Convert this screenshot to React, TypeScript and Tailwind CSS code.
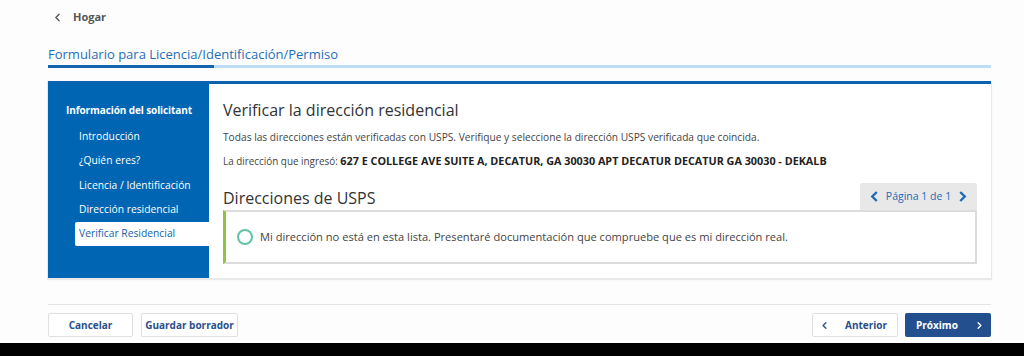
import { ChevronLeft, ChevronRight } from "lucide-react"

const steps = [
  "Introducción",
  "¿Quién eres?",
  "Licencia / Identificación",
  "Dirección residencial",
]

function Chevron({ dir }: { dir: "left" | "right" }) {
  return (
    <svg viewBox="0 0 10 14" className="h-[13px] w-[9px] shrink-0" fill="none">
      <polyline
        points={dir === "left" ? "7.5,2 2.5,7 7.5,12" : "2.5,2 7.5,7 2.5,12"}
        stroke="currentColor"
        strokeWidth={2.6}
        strokeLinejoin="miter"
      />
    </svg>
  )
}

export default function App() {
  return (
    <div className="flex h-[356px] w-[1024px] flex-col bg-[#fdfdfd] font-['Open_Sans',sans-serif] text-[#333]">
      {/* Breadcrumb */}
      <div className="flex h-[34px] items-center gap-[9px] pl-[51px] text-[11px] font-bold text-[#555]">
        <ChevronLeft className="h-[13px] w-[13px]" strokeWidth={2.5} />
        <span>Hogar</span>
      </div>

      <div className="ml-[48px] w-[943px]">
        {/* Title */}
        <h1 className="pt-[9px] text-[13px] leading-[22px] text-[#1f6fb7]">
          Formulario para Licencia/Identificación/Permiso
        </h1>
        <div className="flex h-[3px]">
          <div className="w-[166px] bg-[#1465b0]" />
          <div className="flex-1 bg-[#bddcf8]" />
        </div>

        {/* Card */}
        <div className="mt-[13px] flex h-[197px] border-t-[3px] border-[#0a63b0] bg-white shadow-[0_1px_1px_1px_rgba(0,0,0,0.08)]">
          <aside className="w-[161px] shrink-0 bg-[#0066b3] pt-[15px] text-white">
            <p className="pl-[18px] text-[10px] font-bold leading-[22px] tracking-[-0.1px]">
              Información del solicitant
            </p>
            <ul className="mt-[3px] flex flex-col pl-[27px] text-[10.3px]">
              {steps.map((s) => (
                <li key={s} className="flex h-[24.5px] items-center pl-[4px]">
                  {s}
                </li>
              ))}
              <li className="flex h-[24px] items-center rounded-l-[2px] bg-white pl-[4px] text-[#1461ad]">
                Verificar Residencial
              </li>
            </ul>
          </aside>

          <section className="flex-1 pl-[14px] pr-[14px] pt-[14px]">
            <h2 className="text-[16px] leading-[24px] text-[#333]">
              Verificar la dirección residencial
            </h2>
            <p className="mt-[7px] text-[10.2px] leading-[16px] text-[#444]">
              Todas las direcciones están verificadas con USPS. Verifique y seleccione la dirección USPS verificada que coincida.
            </p>
            <p className="mt-[8px] text-[9.9px] leading-[16px] text-[#444]">
              La dirección que ingresó:{" "}
              <span className="text-[10.8px] font-bold text-[#222]">
                627 E COLLEGE AVE SUITE A, DECATUR, GA 30030 APT DECATUR DECATUR GA 30030 - DEKALB
              </span>
            </p>

            <div className="mt-[14px] flex items-end justify-between">
              <h3 className="pb-[1px] text-[16px] leading-[22px] text-[#333]">
                Direcciones de USPS
              </h3>
              <div className="flex h-[27px] w-[117px] items-center justify-center gap-[7px] rounded-t-[2px] bg-[#e8e8e8] text-[10.5px] text-[#1d6bb5]">
                <Chevron dir="left" />
                <span>Página 1 de 1</span>
                <Chevron dir="right" />
              </div>
            </div>
            <div className="flex h-[54px] items-center gap-[7px] border-2 border-l-[3px] border-[#dcdcdc] border-l-[#8cc63e] pl-[11px]">
              <span className="h-[16px] w-[16px] shrink-0 rounded-full border-2 border-[#5fc4a6]" />
              <span className="text-[11.1px] text-[#444]">
                Mi dirección no está en esta lista. Presentaré documentación que compruebe que es mi dirección real.
              </span>
            </div>
          </section>
        </div>

        {/* Footer */}
        <div className="mt-[26px] flex items-center justify-between border-t border-[#e4e4e4] pt-[8px] text-[10px] font-bold whitespace-nowrap">
          <div className="flex gap-[8px]">
            <button className="h-[24px] w-[85px] rounded-[2px] border border-[#e0e0e0] bg-white text-[#2a4f8c]">
              Cancelar
            </button>
            <button className="h-[24px] w-[97px] rounded-[2px] border border-[#e0e0e0] bg-white text-[#2a4f8c]">
              Guardar borrador
            </button>
          </div>
          <div className="flex gap-[7px]">
            <button className="flex h-[24px] w-[86px] items-center rounded-[2px] border border-[#e0e0e0] bg-white pl-[6px] text-[#2a4f8c]">
              <ChevronLeft className="h-[11px] w-[11px] shrink-0" strokeWidth={3} />
              <span className="ml-[15px]">Anterior</span>
            </button>
            <button className="flex h-[24px] w-[86px] items-center justify-between rounded-[2px] bg-[#244f8f] pl-[11px] pr-[6px] text-white">
              <span>Próximo</span>
              <ChevronRight className="h-[11px] w-[11px] shrink-0" strokeWidth={3} />
            </button>
          </div>
        </div>
      </div>

      <div className="mt-auto h-[13px] w-full bg-black" />
    </div>
  )
}
